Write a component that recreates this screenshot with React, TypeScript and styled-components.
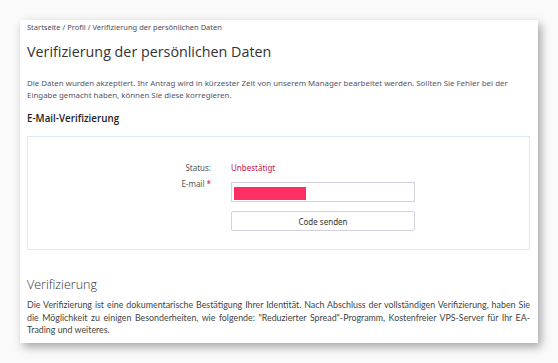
import React from 'react';
import styled, {createGlobalStyle} from "styled-components";

const GlobalStyle = createGlobalStyle`
  body {
    margin: 0;
    background-color: #fafafa;
    font-family: "Open Sans", sans-serif;
  }
`

export default function App() {
    return (
        <Page>
            <GlobalStyle/>
            <Card>
                <Breadcrumbs>Startseite / Profil / Verifizierung der persönlichen Daten</Breadcrumbs>
                <Title>Verifizierung der persönlichen Daten</Title>
                <Intro>
                    Die Daten wurden akzeptiert. Ihr Antrag wird in kürzester Zeit von unserem Manager bearbeitet
                    werden. Sollten Sie Fehler bei der Eingabe gemacht haben, können Sie diese korregieren.
                </Intro>
                <SubTitle>E-Mail-Verifizierung</SubTitle>
                <FormBox>
                    <FormGrid>
                        <Label $shift={-1}>Status:</Label>
                        <Status>Unbestätigt</Status>
                        <Label $shift={-4}>E-mail <Required>*</Required></Label>
                        <Input>
                            <Hidden/>
                        </Input>
                        <span/>
                        <Button>Code senden</Button>
                    </FormGrid>
                </FormBox>
                <SectionTitle>Verifizierung</SectionTitle>
                <Text>
                    Die Verifizierung ist eine dokumentarische Bestätigung Ihrer Identität. Nach Abschluss der
                    vollständigen Verifizierung, haben Sie die Möglichkeit zu einigen Besonderheiten, wie folgende:
                    "Reduzierter Spread"-Programm, Kostenfreier VPS-Server für Ihr EA-Trading und weiteres.
                </Text>
            </Card>
        </Page>
    );
};

const Page = styled.div`
  padding: 20px 20px;
  height: 363px;
  box-sizing: border-box;
`

const Card = styled.div`
  width: 518px;
  height: 323px;
  box-sizing: border-box;
  background: #fff;
  padding: 2px 8px 0 7px;
  box-shadow: 3px 4px 9px rgba(0, 0, 0, 0.35);
  overflow: hidden;
`

const Breadcrumbs = styled.div`
  font-family: "Noto Sans", sans-serif;
  font-size: 7.5px;
  color: #4a4a5a;
  line-height: 10px;
`

const Title = styled.h1`
  margin: 9px 0 0;
  font-size: 14.3px;
  font-weight: 400;
  color: #333;
  line-height: 21px;
`

const Intro = styled.p`
  margin: 15px 0 0;
  font-family: "Noto Sans", sans-serif;
  font-size: 7.9px;
  line-height: 12px;
  color: #55556a;
`

const SubTitle = styled.h2`
  margin: 11px 0 0;
  font-size: 9.8px;
  font-weight: 600;
  color: #222;
  line-height: 14px;
`

const FormBox = styled.div`
  margin-top: 10px;
  border: 1px solid #dcecee;
  height: 114px;
  box-sizing: border-box;
  padding-top: 26px;
`

const FormGrid = styled.div`
  display: grid;
  grid-template-columns: 183px 184px;
  column-gap: 20px;
  row-gap: 8px;
  align-items: start;
  font-family: "Noto Sans", sans-serif;
  font-size: 8px;
`

const Label = styled.div<{ $shift?: number }>`
  text-align: right;
  color: #555;
  line-height: 12px;
  margin-top: ${p => p.$shift ?? 0}px;
`

const Required = styled.span`
  color: #d0103a;
`

const Status = styled.div`
  color: #c8174a;
  line-height: 12px;
  margin-top: -1px;
`

const Input = styled.div`
  height: 20px;
  box-sizing: border-box;
  border: 1px solid #d3d0e0;
  padding: 4px 2px;
`

const Hidden = styled.div`
  width: 72px;
  height: 13px;
  background: #ff2e63;
`

const Button = styled.div`
  height: 20px;
  margin-top: 1px;
  box-sizing: border-box;
  border: 1px solid #d3d0e0;
  border-radius: 2px;
  display: flex;
  align-items: center;
  justify-content: center;
  color: #333;
  font-size: 8px;
`

const SectionTitle = styled.h3`
  margin: 26px 0 0;
  font-size: 12.5px;
  font-weight: 300;
  color: #333;
  line-height: 18px;
`

const Text = styled.p`
  margin: 5px 0 0;
  font-family: "Lato", sans-serif;
  font-size: 8.85px;
  line-height: 12.5px;
  color: #444;
  text-align: justify;
`
